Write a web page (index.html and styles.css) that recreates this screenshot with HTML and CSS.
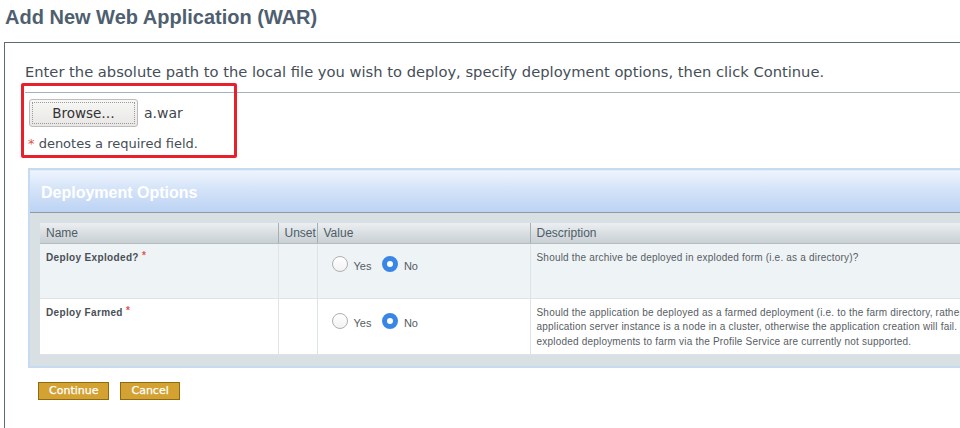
FILE: index.html
```html
<!DOCTYPE html>
<html>
<head>
<meta charset="utf-8">
<link rel="stylesheet" href="styles.css">
</head>
<body>
<h1 class="title">Add New Web Application (WAR)</h1>
<div class="content">
  <p class="intro">Enter the absolute path to the local file you wish to deploy, specify deployment options, then click Continue.</p>
  <div class="rule"></div>
  <div class="file-row">
    <button class="browse">Browse…</button>
    <span class="file-name">a.war</span>
  </div>
  <p class="required"><span class="star">*</span> denotes a required field.</p>
  <div class="highlight"></div>

  <div class="panel">
    <div class="panel-head">Deployment Options</div>
    <div class="panel-body">
      <table class="opts">
        <colgroup>
          <col class="c-name">
          <col class="c-unset">
          <col class="c-value">
          <col class="c-desc">
        </colgroup>
        <thead>
          <tr class="head">
            <th>Name</th>
            <th>Unset</th>
            <th>Value</th>
            <th>Description</th>
          </tr>
        </thead>
        <tbody>
          <tr class="odd">
            <td class="name">Deploy Exploded? <span class="req">*</span></td>
            <td></td>
            <td class="value">
              <span class="choice"><span class="radio"></span><span class="lbl">Yes</span></span>
              <span class="choice"><span class="radio on"></span><span class="lbl">No</span></span>
            </td>
            <td class="desc">Should the archive be deployed in exploded form (i.e. as a directory)?</td>
          </tr>
          <tr class="even">
            <td class="name">Deploy Farmed <span class="req">*</span></td>
            <td></td>
            <td class="value">
              <span class="choice"><span class="radio"></span><span class="lbl">Yes</span></span>
              <span class="choice"><span class="radio on"></span><span class="lbl">No</span></span>
            </td>
            <td class="desc">Should the application be deployed as a farmed deployment (i.e. to the farm directory, rather than the deploy directory)? Only check this if the<br>application server instance is a node in a cluster, otherwise the application creation will fail. Note that<br>exploded deployments to farm via the Profile Service are currently not supported.</td>
          </tr>
        </tbody>
      </table>
    </div>
  </div>

  <div class="actions">
    <button class="btn">Continue</button>
    <button class="btn">Cancel</button>
  </div>
</div>
</body>
</html>
```

FILE: styles.css
```css
html, body {
  margin: 0;
  padding: 0;
  background: #ffffff;
  overflow: hidden;
}
body {
  width: 960px;
  height: 428px;
  font-family: "DejaVu Sans", sans-serif;
}
.title {
  margin: 0;
  padding: 5px 5px 0;
  font-family: "Liberation Sans", Arial, sans-serif;
  font-weight: bold;
  font-size: 20px;
  line-height: 24px;
  color: #4f5f6f;
}
.content {
  position: relative;
  margin: 13px 0 0 4px;
  border-top: 1px solid #5d6b72;
  border-left: 1px solid #5d6b72;
  padding: 20px 0 0 20px;
  height: 372px;
}
.intro {
  margin: 0;
  font-size: 14.7px;
  line-height: 17px;
  color: #454e57;
  white-space: nowrap;
}
.rule {
  margin-top: 12px;
  border-top: 1px solid #a2b1bc;
}
.file-row {
  display: flex;
  align-items: center;
  margin: 6px 0 0 4px;
}
.browse {
  width: 109px;
  height: 28px;
  margin: 0;
  padding: 0;
  border: 1px solid #bcbcbc;
  border-radius: 3px;
  background: linear-gradient(#f7f7f6, #e8e7e5);
  font-family: "DejaVu Sans", sans-serif;
  font-size: 13.5px;
  color: #333333;
  outline: 1px dotted #9a9a9a;
  outline-offset: -4px;
}
.file-name {
  margin-left: 6px;
  font-size: 14px;
  color: #3e464e;
}
.required {
  margin: 9px 0 0 3px;
  font-size: 13px;
  line-height: 16px;
  color: #454e57;
}
.star {
  color: #e4514c;
}
.highlight {
  position: absolute;
  left: 16px;
  top: 40px;
  width: 216px;
  height: 75px;
  box-sizing: border-box;
  border: 3px solid #e8202b;
  border-radius: 2px;
}
.panel {
  margin: 16px 0 0 3px;
  width: 1100px;
  border: 2px solid #c6daf2;
}
.panel-head {
  height: 41px;
  line-height: 43px;
  padding-left: 11px;
  background: linear-gradient(#eef4fd, #d4e3f8 45%, #bcd3f4);
  border-top: 1px solid #e4eefb;
  border-bottom: 1px solid #8f9ba3;
  font-family: "Liberation Sans", Arial, sans-serif;
  font-weight: bold;
  font-size: 16px;
  color: #ffffff;
}
.panel-body {
  background: #d9e0e3;
  padding: 10px 10px 11px;
}
.opts {
  border-collapse: collapse;
  table-layout: fixed;
  width: 100%;
  font-family: "Liberation Sans", Arial, sans-serif;
}
.c-name { width: 238px; }
.c-unset { width: 39px; }
.c-value { width: 213px; }
.opts tr.head { height: 20px; }
.opts th {
  padding: 0 0 0 6px;
  text-align: left;
  font-weight: normal;
  font-size: 12px;
  line-height: 14px;
  color: #4f5c66;
  background: linear-gradient(#eceff1, #d5dbde 60%, #c9d0d4);
  border-right: 1px solid #a7b0b5;
  border-bottom: 1px solid #b4bcc0;
  white-space: nowrap;
}
.opts td {
  vertical-align: top;
  border-right: 1px solid #dde3e6;
  border-bottom: 1px solid #dde3e6;
  padding: 0;
}
.opts tr.odd { height: 55px; }
.opts tr.even { height: 56px; }
.odd td { background: #eef3f6; }
.even td { background: #ffffff; }
.opts td.name {
  padding: 6px 6px 0;
  font-weight: bold;
  font-size: 10px;
  line-height: 12px;
  letter-spacing: 0.35px;
  color: #4a4f55;
  white-space: nowrap;
}
.req {
  color: #e4514c;
  vertical-align: 2px;
}
.opts td.value {
  padding: 11px 0 0 14px;
  white-space: nowrap;
}
.opts .even td.value { padding-top: 13px; }
.choice {
  display: inline-flex;
  align-items: center;
  margin-right: 6px;
}
.radio {
  display: inline-block;
  width: 16px;
  height: 16px;
  box-sizing: border-box;
  border: 1px solid #b0b0b0;
  border-radius: 50%;
  background: linear-gradient(#ffffff, #f2f2f2);
}
.radio.on {
  border: 5px solid #3a86e6;
  background: #ffffff;
}
.lbl {
  margin: 5px 0 0 6px;
  font-size: 11px;
  line-height: 13px;
  color: #555c63;
}
.opts td.desc {
  padding: 7px 6px 0 6px;
  font-size: 10px;
  letter-spacing: 0.2px;
  line-height: 14.5px;
  color: #575d63;
  white-space: nowrap;
}
.actions {
  display: flex;
  gap: 11px;
  margin: 14px 0 0 13px;
}
.btn {
  margin: 0;
  height: 18px;
  padding: 0 10px;
  border: 1px solid #8f6b10;
  border-radius: 0;
  background: #d3a233;
  font-family: "DejaVu Sans", sans-serif;
  font-size: 11px;
  line-height: 16px;
  color: #ffffff;
  -webkit-text-stroke: 0.25px #ffffff;
}
```
